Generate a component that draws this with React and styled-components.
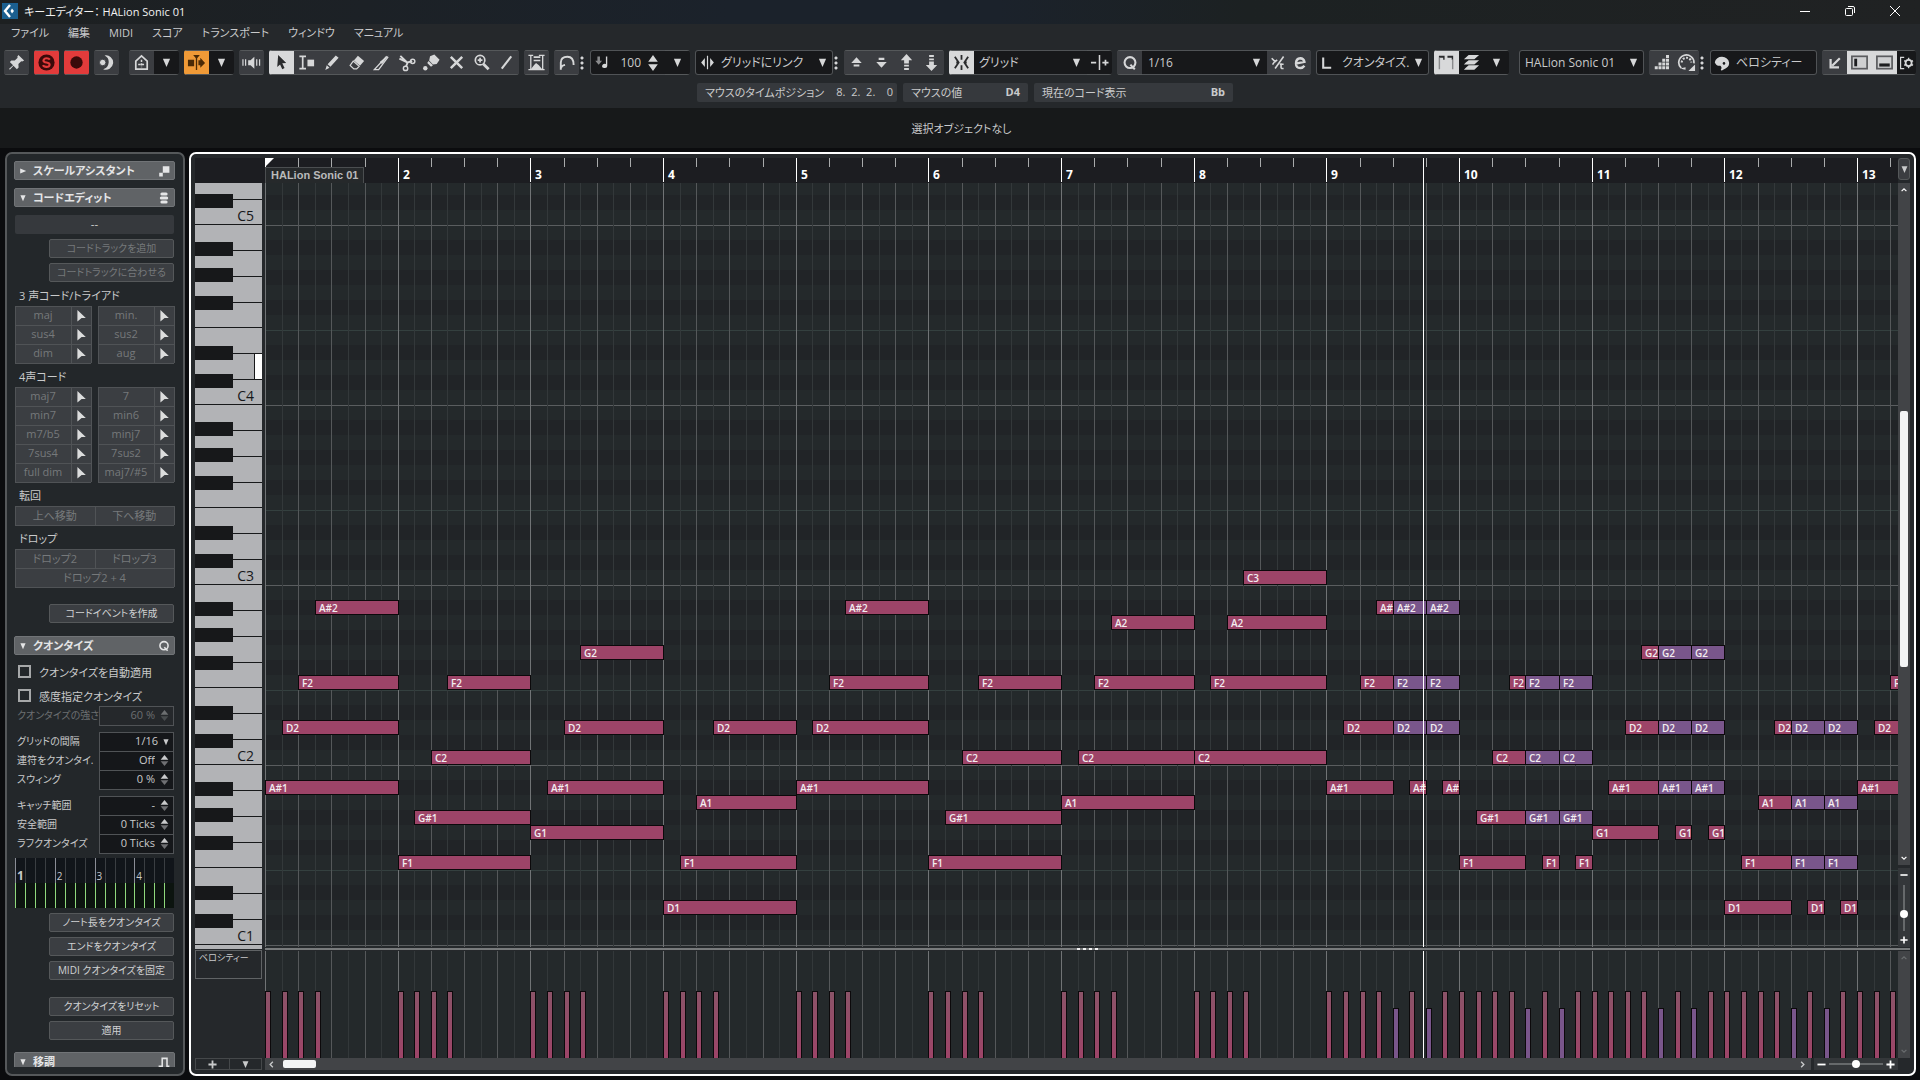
import React from "react";
import styled, { createGlobalStyle, css } from "styled-components";

const BAR = 132.667;
const ROW = 15;
const PLAYHEAD = 8.726;

// room left for the roll once the inspector, keys and scrollbar are placed
const VIEW = window.innerWidth - 287;
const BARS = Math.ceil(VIEW / BAR);

const SEMI = { C: 0, "C#": 1, D: 2, "D#": 3, E: 4, F: 5, "F#": 6, G: 7, "G#": 8, A: 9, "A#": 10, B: 11 };
const C1_TOP = 747;

const xAt = (bar, eighth = 0) => Math.round((bar + eighth / 8) * BAR);
const yAt = (name) => {
  const octave = Number(name.slice(-1));
  return C1_TOP - ROW * (12 * (octave - 1) + SEMI[name.slice(0, -1)]);
};

const CHORDS = [
  ["A#1", "D2", "F2", "A#2"],
  ["F1", "G#1", "C2", "F2"],
  ["G1", "A#1", "D2", "G2"],
  ["D1", "F1", "A1", "D2"],
];

const song = [];
const add = (bar, from, to, name, soft = false) => song.push({ bar, from, to, name, soft });

[0, 1, 2, 3, 4, 5].forEach((bar) => CHORDS[bar % 4].forEach((n, i) => add(bar, i, 8, n)));
["A1", "C2", "F2", "A2"].forEach((n, i) => add(6, i, 8, n));
["C2", "F2", "A2", "C3"].forEach((n, i) => add(7, i, 8, n));
[8, 9, 10, 11, 12].forEach((bar) => {
  const chord = CHORDS[(bar - 8) % 4];
  chord.forEach((n, i) => add(bar, i, 4, n));
  [4, 6].forEach((at) => {
    chord.slice(1).forEach((n) => add(bar, at, at + 2, n, true));
    add(bar, at + 1, at + 2, chord[0]);
  });
});

const notes = song.filter((n) => xAt(n.bar, n.from) < VIEW);
const hits = [...new Map(notes.map((n) => [`${n.bar}-${n.from}`, n])).values()];

const lines = Array.from({ length: BARS * 8 }, (_, i) => ({
  x: xAt(0, i),
  kind: i % 8 === 0 ? "bar" : i % 2 === 0 ? "beat" : "sub",
}));

const OCTAVE_ROWS = ["w", "b", "w", "b", "w", "b", "w", "w", "b", "w", "b", "w"];
const rowStops = OCTAVE_ROWS.map(
  (r, i) => `${r === "w" ? "#24292b" : "#212427"} ${i * ROW}px ${(i + 1) * ROW}px`
).join(", ");

/* ---------- icons ---------- */

const Svg = ({ children, size = 20, ...rest }) => (
  <svg width={size} height={size} viewBox="0 0 20 20" fill="currentColor" aria-hidden="true" {...rest}>
    {children}
  </svg>
);

const stroke = { fill: "none", stroke: "currentColor", strokeWidth: 2 };

const icons = {
  pin: (
    <path d="M12 2l6 6-2 1-1-.4-3 3 .2 3.600-1.800 1.800-3.600-3.600L3 17.500l-.8-.8 4.200-3.800L3 9.400l1.600-1.600 3.600.2 3-3L10.800 4z" />
  ),
  solo: (
    <>
      <circle cx="10" cy="10" r="8.500" fill="#3a0a0a" />
      <path d="M13.500 7Q12.500 5.500 10 5.500T6.800 7.800Q6.800 9.500 10 10T13.300 12.400Q13 14.600 10 14.600T6.300 12.800" fill="none" stroke="#e23b3b" strokeWidth="2.200" />
    </>
  ),
  record: <circle cx="10" cy="10" r="6.500" fill="#3a0a0a" />,
  moon: (
    <>
      <path d="M8 2.500a7.600 7.600 0 1 1-1.500 14.500A7.800 7.800 0 0 0 8 2.500z" />
      <circle cx="6" cy="10" r="3.400" stroke="#3b3d41" strokeWidth="1" />
    </>
  ),
  house: (
    <>
      <path d="M4 17V8.500L10 3l6 5.500V17z" fill="none" stroke="currentColor" strokeWidth="1.800" />
      <path d="M10 7v8M6.500 12h7" fill="none" stroke="currentColor" strokeWidth="1.600" strokeDasharray="2.500 1.200" />
    </>
  ),
  autoscroll: (
    <g fill="#4a2a06">
      <path d="M6.500 2h7L10.700 5.500V18H9.300V5.500zM1 7h6.500v7H1zM12 7.500h2V5l5 5.500-5 5v-2.500h-2z" />
    </g>
  ),
  speaker: (
    <>
      <path d="M6.500 7.500H9L13 4v12.500L9 13H6.500z" />
      <path d="M1 6.500v7M3.800 6.500v7M15.500 6.500v7M18.500 6.500v7" fill="none" stroke="currentColor" strokeWidth="1.300" />
    </>
  ),
  arrow: <path d="M6.500 2l8.500 8.500-4.200.4 2.400 5-2.400 1.100-2.300-5-3 2.800z" fill="#2a2b2d" />,
  range: (
    <>
      <path d="M2.500 3.500h7M6 3.500v13M2.500 16.500h7" {...stroke} strokeWidth="1.800" />
      <rect x="11" y="7" width="7" height="7" />
    </>
  ),
  pencil: <path d="M14.500 2.500l3 2.500-8.600 9.600-3-2.700zM5 13l2.900 2.600L3.500 18z" />,
  erase: (
    <>
      <path d="M11.500 3l6.500 5.500-4.300 4.800-6.500-5.500z" />
      <path d="M6.500 8.500l6.300 5.500-2.600 2.800H7.200L3.300 13z" fill="none" stroke="currentColor" strokeWidth="1.300" />
    </>
  ),
  trim: (
    <>
      <path d="M17.500 2.500l-7 9-2.500-2z" />
      <path d="M15.500 3.500L2.500 17.500h4.500L17 4" fill="none" stroke="currentColor" strokeWidth="1.400" />
    </>
  ),
  scissors: (
    <>
      <path d="M3.500 3L11 10.200l-1.500 4.300M2.500 6L11 10l5-1.500" {...stroke} />
      <circle cx="9" cy="16.200" r="2.300" {...stroke} strokeWidth="1.500" />
      <circle cx="16.500" cy="8.800" r="2.300" {...stroke} strokeWidth="1.500" />
    </>
  ),
  glue: (
    <>
      <path d="M13 1.500l5.500 5.500-3 4.500-4 .5-4-4 1-4.500z" />
      <path d="M7 8.500l4.500 4.500-2 1.500L5.500 10.500z" />
      <circle cx="3.500" cy="16" r="2.300" />
    </>
  ),
  mute: <path d="M4 4l12 12M16 4L4 16" {...stroke} strokeWidth="2.600" />,
  zoom: (
    <>
      <circle cx="8.500" cy="7.500" r="5" {...stroke} strokeWidth="1.800" />
      <path d="M8.500 5v5M6 7.500h5" {...stroke} strokeWidth="1.800" />
      <path d="M12 11.500l5.500 5.500" {...stroke} strokeWidth="3" />
    </>
  ),
  line: <path d="M5 16.500L15 3.500" {...stroke} strokeWidth="2.200" />,
  insert: (
    <>
      <path d="M1.500 2.500h5M4 2.500v15M12.500 2.500H18.500M16.500 2.500v15M1.500 17.500H18.500" {...stroke} strokeWidth="1.400" />
      <path d="M7 3.500h7v1.800H7zM7 7h7v1.800H7zM4 17L7.500 12.500l2-2 3 2.500 3.500 4z" />
    </>
  ),
  curve: <path d="M4 17.500V10q0-6 7-6 6.500 0 6.500 8.500M4 16q1-3 4.500-3.500" {...stroke} />,
  noteIn: (
    <>
      <path d="M4 3h3v5h2.500l-4 4.500-4-4.500H4z" opacity=".6" />
      <path d="M14 3h1.600v11a3 2.500 0 1 1-1.600-2.200z" />
    </>
  ),
  linkGrid: <path d="M6.500 4v12L1.500 10zM9.200 1h1.600v18H9.200zM13.500 4v12l5-6z" />,
  up1: <path d="M10 4.500l5.500 6h-11zM7 12h6v2.300H7z" />,
  down1: <path d="M7 5h6v2.300H7zM10 15.500l5.500-6h-11z" />,
  up2: <path d="M10 1l6 6.500H12.500V11h-5V7.500H4zM7.500 12.300h5v2h-5zM7.500 15.800h5v2h-5z" />,
  down2: <path d="M10 19l6-6.500H12.500V9h-5v3.500H4zM7.500 5.700h5v2h-5zM7.500 2.200h5v2h-5z" />,
  snap: (
    <path d="M3 4l4 6-4 6M17 4l-4 6 4 6M10 2v5M10 13v5M4.500 10h3M12.500 10h3" fill="none" stroke="#2a2b2d" strokeWidth="1.900" />
  ),
  snapType: <path d="M1 9.200h5.500v1.800H1zM9.200 2h1.600v16H9.200zM13 9.200H19.500v1.800h-6.500zM15.400 7h1.800v6.200h-1.800z" />,
  q: (
    <>
      <circle cx="10" cy="9.500" r="6.800" {...stroke} strokeWidth="2.600" />
      <path d="M10.500 12l5.500 6" {...stroke} strokeWidth="2.600" />
    </>
  ),
  iter: (
    <path d="M2 5l4 4 2.500-2M5 9.500l-2 3M16 3L6 17M13 11v5q0 1.500 3 1M11.500 12h4.500" {...stroke} strokeWidth="1.900" />
  ),
  e: <path d="M4.500 10.800L15.500 8.500Q14.500 4 10.500 4 5 4.500 5 10.500q0 6 5.500 5.800 3 0 5-2.800" {...stroke} strokeWidth="3" />,
  ell: <path d="M4 3v13h10" {...stroke} strokeWidth="2.600" />,
  parts: (
    <g fill="#2a2b2d">
      <path d="M2 3h6v4H6.500V5H2zM11 3h6v4h-1.500V5H11z" />
      <path d="M2.500 5v12M16.500 7v10" stroke="#8a8b8d" strokeWidth="1.500" />
    </g>
  ),
  layers: <path d="M7 2h11l-5 4.500H2zM7 7.500h11L13 12H2l2-2zM7 13h11l-5 4.500H2l2-2z" />,
  steps: (
    <path d="M1 15h4v4H1zM6 15h4v4H6zM11 15h4v4h-4zM16 15h4v4h-4zM6 10h4v4H6zM11 10h4v4h-4zM16 10h4v4h-4zM11 5h4v4h-4zM16 5h4v4h-4zM16 0h4v4h-4z" />
  ),
  palette: (
    <>
      <path d="M4.500 16A8 8 0 1 1 17.800 11" {...stroke} strokeWidth="1.800" />
      <path d="M5 10a5 5 0 0 1 10 0" fill="none" stroke="currentColor" strokeWidth="2.200" strokeDasharray="2 1.600" />
      <path d="M4 16q2 1.500 5 1.500V15M19 12v7h-7z" />
    </>
  ),
  velocity: (
    <>
      <path d="M1 9a9 8 0 1 1 11 9q-3 2.500-3.500.5 2-3-.5-5-5.500.5-7-4.500z" />
      <circle cx="12.500" cy="10.500" r="1.600" fill="#17181a" />
    </>
  ),
  corner: <path d="M16 4L6.500 13.500M4.500 5v10.500H15" {...stroke} strokeWidth="2.800" />,
  leftZone: (
    <>
      <rect x="2" y="3.500" width="16" height="13" fill="#cfd0d1" stroke="#5b5c5f" strokeWidth="1.800" />
      <rect x="4.500" y="6" width="3" height="8" fill="#1d1e20" />
    </>
  ),
  lowZone: (
    <>
      <rect x="2" y="3.500" width="16" height="13" fill="#cfd0d1" stroke="#5b5c5f" strokeWidth="1.800" />
      <rect x="4.500" y="11" width="11" height="3.300" fill="#1d1e20" />
    </>
  ),
  setup: (
    <>
      <path d="M6.500 3H2v14h4.500" {...stroke} strokeWidth="1.500" />
      <circle cx="12" cy="10" r="3.800" {...stroke} strokeWidth="2.200" />
      <path d="M12 3.500v3M12 13.500v3M6.500 7l2.500 1.500M15 11.500l2.500 1.500M6.500 13L9 11.500M15 8.500L17.500 7" {...stroke} strokeWidth="1.800" />
    </>
  ),
  down: <path d="M3.500 3h13L10 18z" />,
  right: <path d="M3 3.500v13L18 10z" />,
  spin: <path d="M10 0l6 8.500H4zM10 20l6-8.500H4z" />,
  spinDim: (
    <>
      <path d="M10 0l7 8.500H3z" />
      <path d="M10 20l7-8.500H3z" opacity=".5" />
    </>
  ),
  scale: <path d="M8 2h11v11H8zM2 13h6v6H2z" />,
  chord: (
    <>
      <rect x="4" y="1" width="12" height="5" rx="2.500" />
      <rect x="3" y="7.500" width="14" height="5" rx="2.500" />
      <rect x="4" y="14" width="12" height="5" rx="2.500" />
    </>
  ),
  transpose: <path d="M1 17h6V4h8v13h4" {...stroke} strokeWidth="2.600" />,
  pointer: <path d="M4 0l14 13.500-7-.3L4 19z" />,
  chevUp: <path d="M4 13l6-6 6 6" {...stroke} strokeWidth="3" />,
  chevDown: <path d="M4 7l6 6 6-6" {...stroke} strokeWidth="3" />,
  chevLeft: <path d="M13 4l-6 6 6 6" {...stroke} strokeWidth="3" />,
  chevRight: <path d="M7 4l6 6-6 6" {...stroke} strokeWidth="3" />,
  minus: <path d="M1 8h18v4H1z" />,
  plus: <path d="M1 8h7V1h4v7h7v4h-7v7H8v-7H1z" />,
};

const Icon = ({ name, size }) => <Svg size={size}>{icons[name]}</Svg>;

/* ---------- styles ---------- */

const GlobalStyle = createGlobalStyle`
  * {
    box-sizing: border-box;
  }

  body {
    margin: 0;
    background: #0b0c0e;
    overflow: hidden;
  }

  body, button, input, select {
    font-family: "Open Sans", "Noto Sans CJK JP", sans-serif;
    font-feature-settings: "palt";
    font-size: 11px;
    color: #c9cacb;
  }

  button, input, select {
    margin: 0;
    padding: 0;
    border: 0;
    border-radius: 0;
    background: none;
    outline: none;
    appearance: none;
  }

  svg {
    display: block;
    flex: none;
  }
`;

const Window = styled.div`
  height: 100vh;
  display: flex;
  flex-direction: column;
`;

const Top = styled.header`
  background: #25282b;
  padding-bottom: 6px;
`;

const TitleBar = styled.div`
  display: flex;
  align-items: center;
  height: 24px;
  padding: 0 18px 2px 2px;
  gap: 6px;
  color: #f2f2f2;
  background: linear-gradient(90deg, #1d2021, #1b222b 38%, #1b222b 52%, #1c2122 65%, #202223);

  h1 {
    flex: 1;
    margin: 0;
    font-size: 11px;
    font-weight: 400;
    white-space: pre;
  }
`;

const Controls = styled.div`
  display: flex;
  gap: 31px;

  button {
    width: 14px;
    height: 14px;
    color: #fff;
  }
`;

const MenuBar = styled.nav`
  display: flex;
  gap: 19px;
  height: 18px;
  padding: 0 0 2px 11px;
  align-items: center;
`;

const Toolbar = styled.div`
  display: flex;
  gap: 5px;
  height: 25px;
  margin-top: 8px;
  padding: 0 4px;
`;

const tones = {
  plain: css`
    background: #3b3d41;
    color: #d6d7d8;
  `,
  red: css`
    background: #e23b3b;
  `,
  orange: css`
    background: #f09a37;
  `,
  light: css`
    background: #d8d9da;
  `,
  dark: css`
    background: #17181a;
    color: #d6d7d8;
  `,
};

const Group = styled.div`
  display: flex;
  flex: ${({ $grow }) => ($grow ? "1 1 auto" : "none")};
  width: ${({ $width }) => ($width ? `${$width}px` : "auto")};
  margin-left: ${({ $apart }) => ($apart ? "5px" : "0")};
  box-shadow: inset 0 0 0 1px #505356;
  border-radius: 3px;
  overflow: hidden;
  background: #17181a;
`;

const Tool = styled.button`
  display: flex;
  align-items: center;
  justify-content: center;
  flex: none;
  width: ${({ $width }) => $width || 25}px;
  height: 25px;
  ${({ $tone }) => tones[$tone || "plain"]}
  box-shadow: inset 0 1px 0 #55585a, inset 0 -1px 0 #55585a;
`;

const Lead = styled.span`
  display: flex;
  align-items: center;
  justify-content: center;
  flex: none;
  width: 24px;
  color: #d6d7d8;
`;

const Pick = styled.label`
  display: flex;
  flex: 1;
  min-width: 0;
  align-items: center;
  padding-right: 5px;
  color: #d6d7d8;

  select {
    flex: 1;
    min-width: 0;
    height: 25px;
    padding-left: ${({ $pad }) => $pad || 2}px;
    font-size: 12px;
  }
`;

const Tempo = styled.input`
  width: 27px;
  text-align: right;
  font-size: 12px;
`;

const Grip = styled.i`
  flex: none;
  width: 6px;
  margin: 5px 0 5px -5px;
  background: radial-gradient(circle at 3px 3px, #d6d7d8 1px, transparent 2px) 0 0 / 6px 5px;
`;

const InfoRow = styled.div`
  display: flex;
  justify-content: center;
  gap: 6px;
  margin-top: 8px;
  padding-left: 10px;
`;

const Info = styled.div`
  display: flex;
  align-items: center;
  justify-content: space-between;
  width: ${({ $width }) => $width}px;
  height: 19px;
  padding: 0 ${({ $light }) => ($light ? 4 : 8)}px 2px 8px;
  border-radius: 2px;
  background: #36393d;
  white-space: pre;

  b {
    font-weight: ${({ $light }) => ($light ? 400 : 700)};
  }
`;

const Status = styled.div`
  display: flex;
  flex: none;
  height: 40px;
  padding-left: 3px;
  align-items: center;
  justify-content: center;
  background: #17191a;
`;

const Workspace = styled.main`
  flex: 1;
  min-height: 0;
  display: flex;
  gap: 4px;
  padding: 4px 4px 4px 5px;
`;

const Sidebar = styled.aside`
  flex: none;
  width: 180px;
  padding: 7px 8px 7px 7px;
  border: 2px solid #55585a;
  border-radius: 7px;
  background: #23272a;
`;

const SideScroll = styled.div`
  display: flex;
  flex-direction: column;
  height: 100%;
  overflow: hidden;
`;

const Head = styled.button`
  display: flex;
  align-items: center;
  flex: none;
  gap: 6px;
  height: 19px;
  padding: 0 4px;
  margin-top: ${({ $gap }) => $gap || 0}px;
  border: 1px solid #717477;
  border-radius: 2px;
  background: #606366;
  color: #e4e5e6;
  text-align: left;
  font-weight: 600;

  span {
    flex: 1;
    padding-bottom: 1px;
  }
`;

const Readout = styled.output`
  flex: none;
  height: 19px;
  margin: 8px 1px 0;
  border-radius: 2px;
  background: #36393d;
  text-align: center;
  font-family: "Liberation Sans", sans-serif;
  line-height: 19px;
`;

const PushButton = styled.button`
  flex: none;
  width: 125px;
  height: 19px;
  margin: ${({ $gap }) => $gap || 5}px 1px 0 auto;
  padding-bottom: 2px;
  border: 1px solid #55585a;
  border-radius: 2px;
  background: #3b3e42;
  color: #d0d1d2;
  font-size: 10px;
  white-space: nowrap;

  &:disabled {
    color: #76797b;
  }
`;

const Caption = styled.div`
  flex: none;
  height: 16px;
  margin-top: 6px;
  padding-left: 5px;
  line-height: 16px;
`;

const Cells = styled.div`
  display: grid;
  flex: none;
  grid-template-columns: ${({ $cols }) => $cols};
  margin: 2px 1px 0;
`;

const Cell = styled.button`
  display: flex;
  align-items: center;
  justify-content: center;
  height: 19px;
  padding-bottom: ${({ $icon }) => ($icon ? 0 : 2)}px;
  grid-column: ${({ $wide }) => ($wide ? "1 / -1" : "auto")};
  background: #3b3e42;
  box-shadow: inset 1px 1px 0 #505356, 0 1px 0 #505356, 1px 0 0 #505356;
  color: ${({ $icon }) => ($icon ? "#dcdddd" : "#76797b")};
`;

const Check = styled.label`
  display: flex;
  flex: none;
  align-items: center;
  gap: 8px;
  height: 19px;
  margin-top: ${({ $gap }) => $gap}px;
  padding: 0 0 2px 4px;

  input {
    width: 13px;
    height: 13px;
    border: 2px solid #a6a8a9;
  }
`;

const Field = styled.div`
  display: flex;
  flex: none;
  align-items: center;
  height: 19px;
  margin: ${({ $gap }) => $gap || 0}px 1px 0;
  color: ${({ $off }) => ($off ? "#6c6f71" : "#c9cacb")};

  label {
    flex: 1;
    min-width: 0;
    padding: 0 0 2px 2px;
    white-space: nowrap;
    font-size: 10px;
  }

  span {
    display: flex;
    align-items: center;
    flex: none;
    width: 75px;
    height: 20px;
    padding-right: 4px;
    background: ${({ $off }) => ($off ? "#25282b" : "#15171a")};
    box-shadow: inset 0 0 0 1px #505356;
  }

  input, select {
    flex: 1;
    min-width: 0;
    height: 19px;
    margin-right: 4px;
    padding-bottom: 2px;
    text-align: right;
    text-align-last: right;
    color: inherit;
  }
`;

const QuantGrid = styled.div`
  display: flex;
  flex: none;
  height: 50px;
  margin: 5px 1px 0;
  background: linear-gradient(#11151a 50%, #0c140f 50%);
`;

const QuantBeat = styled.div`
  flex: 1;
  padding: 11px 0 0 2px;
  line-height: 14px;
  font-size: ${({ $first }) => ($first ? 12 : 10)}px;
  font-weight: ${({ $first }) => ($first ? 700 : 400)};
  background:
    repeating-linear-gradient(90deg, #8fd97c 0 1px, transparent 1px 10px) 0 25px / 100% 25px no-repeat,
    linear-gradient(#8a8d96, #8a8d96) 0 0 / 1px 25px no-repeat,
    repeating-linear-gradient(90deg, #3a3e42 0 1px, transparent 1px 10px);
`;

const Editor = styled.section`
  flex: 1;
  min-width: 0;
  display: grid;
  grid-template-columns: 67px minmax(0, 1fr) 12px;
  grid-template-rows: 25px minmax(0, 1fr) 4px 107px 12px;
  column-gap: 3px;
  padding: 4px;
  border: 2px solid #fff;
  border-radius: 7px;
  background: #25282b;
`;

const Body = styled.div`
  position: relative;
  overflow: hidden;
  margin-right: -3px;
  background: #24292b;
`;

const RulerCorner = styled.div`
  margin-right: -3px;
  background: #1c1d21;
`;

const Ruler = styled(Body)`
  background: #1c1d21;
`;

const Tick = styled.i`
  position: absolute;
  top: 0;
  width: 1px;
  height: ${({ $bar }) => ($bar ? 24 : 9)}px;
  background: ${({ $bar }) => ($bar ? "#fff" : "#a9abac")};
`;

const BarNumber = styled.b`
  position: absolute;
  top: 9px;
  padding-left: 5px;
  font-size: 12px;
  line-height: 16px;
  color: #fff;
`;

const PartName = styled.div`
  position: absolute;
  top: 9px;
  left: 0;
  height: 16px;
  padding: 0 5px;
  border: 1px solid #4b4e50;
  border-bottom: 0;
  background: #26292b;
  color: #b9babb;
  font: 600 11px/15px "Liberation Sans", sans-serif;
`;

const Locator = styled.i`
  position: absolute;
  top: 0;
  left: 0;
  border-top: 9px solid #fff;
  border-right: 9px solid transparent;
`;

const Roll = styled(Body)`
  background: linear-gradient(${rowStops}) 0 -138px / 100% 180px;

  &::before {
    content: "";
    position: absolute;
    inset: 0;
    background:
      linear-gradient(#5a5d5f 1px, transparent 1px) 0 42px / 100% 180px,
      linear-gradient(#34403f 1px, transparent 1px) 0 147px / 100% 180px;
  }
`;

const lineTones = { bar: "#707375", beat: "#55585a", sub: "#33383a" };

const GridLine = styled.i`
  position: absolute;
  top: 0;
  bottom: 0;
  width: 1px;
  background: ${({ $kind }) => lineTones[$kind]};
`;

const Note = styled.div`
  position: absolute;
  height: 15px;
  padding-left: 3px;
  overflow: hidden;
  border: 1px solid #0c090b;
  background: ${({ $soft }) => ($soft ? "#79568b" : "#9d4468")};
  color: #f3eef1;
  font-size: 10px;
  font-weight: 600;
  line-height: 14px;
  white-space: nowrap;
`;

const Hit = styled.i`
  position: absolute;
  bottom: 0;
  width: 6px;
  height: ${({ $soft }) => ($soft ? 50 : 67)}px;
  border: 1px solid #0c090b;
  border-bottom: 0;
  background: ${({ $soft }) => ($soft ? "#79568b" : "linear-gradient(#8b5368, #9d4468)")};
`;

const PlayLine = styled.i`
  position: absolute;
  top: 0;
  bottom: 0;
  width: 1px;
  background: #fff;
`;

const Keys = styled.div`
  grid-row: 2 / 4;
  overflow: hidden;
  margin-bottom: 2px;
`;

const Octave = styled.div`
  position: relative;

  &:first-child {
    margin-top: -138px;
  }
`;

const WhiteKey = styled.div`
  position: relative;
  height: ${({ $height }) => $height}px;
  padding: 7px 8px 0 0;
  border-bottom: 1px solid #17181a;
  background: #b2b3b6;
  color: #17181a;
  font-size: 14px;
  line-height: 18px;
  text-align: right;

  &::after {
    content: "";
    display: ${({ $pressed }) => ($pressed ? "block" : "none")};
    position: absolute;
    top: 0;
    right: 0;
    bottom: 0;
    width: 7px;
    border-left: 1px solid #17181a;
    background: #fff;
  }
`;

const BlackKey = styled.div`
  position: absolute;
  left: 0;
  width: 38px;
  height: 14px;
  background: #17181a;
`;

const Divider = styled.div`
  grid-column: 2 / 4;
  display: flex;
  justify-content: center;
  align-items: center;
  gap: 3px;
  height: 3px;
  margin-top: 1px;
  border-top: 2px solid #787b7c;

  i {
    width: 3px;
    height: 2px;
    margin-top: -4px;
    background: #f1f1f1;
  }
`;

const LaneName = styled.div`
  height: 29px;
  margin-top: -1px;
  padding: 0 3px;
  border: 1px solid #606365;
  font-size: 9px;
  line-height: 14px;
`;

const Split = styled.div`
  display: grid;
  grid-template-columns: 1fr 1fr;
  border: 1px solid #45484a;

  button {
    display: grid;
    place-items: center;
  }

  button + button {
    border-left: 1px solid #45484a;
  }
`;

const HScroll = styled.div`
  display: flex;
  align-items: center;
  justify-content: space-between;
  gap: 3px;
  min-width: 0;
  margin-right: -3px;
`;

const HTrack = styled.div`
  flex: 1;
  display: flex;
  align-items: center;
  height: 12px;
  padding: 0 4px 0 2px;
  background: #424447;

  i {
    width: 33px;
    height: 8px;
    margin: 0 auto 0 7px;
    border-radius: 2px;
    background: #f3f4f5;
  }
`;

const Zoomer = styled.div`
  display: flex;
  align-items: center;
  justify-content: space-between;
  flex-direction: ${({ $vertical }) => ($vertical ? "column" : "row")};
  width: ${({ $vertical }) => ($vertical ? 12 : 84)}px;
  height: ${({ $vertical }) => ($vertical ? 79 : 12)}px;
  padding: ${({ $vertical }) => ($vertical ? "3px 0" : "0 3px")};
  background: #34373a;
  color: #fff;

  input {
    width: ${({ $vertical }) => ($vertical ? 12 : 54)}px;
    height: ${({ $vertical }) => ($vertical ? 46 : 12)}px;
    writing-mode: ${({ $vertical }) => ($vertical ? "vertical-lr" : "horizontal-tb")};
    background: linear-gradient(#66696b, #66696b) center / ${({ $vertical }) => ($vertical ? "2px 100%" : "100% 2px")} no-repeat;
  }

  input::-webkit-slider-thumb {
    appearance: none;
    width: 8px;
    height: 8px;
    border-radius: 50%;
    background: #fff;
  }
`;

const RulerMenu = styled.button`
  display: grid;
  place-items: center;
  width: 12px;
  height: 22px;
  border: 1px solid #55585a;
  border-radius: 3px;
  background: #3b3d41;
`;

const VScroll = styled.div`
  display: flex;
  flex-direction: column;
  min-height: 0;
  gap: 3px;
`;

const VTrack = styled.div`
  flex: 1;
  display: flex;
  flex-direction: column;
  align-items: center;
  justify-content: space-between;
  padding: 3px 0;
  background: #424447;
  color: ${({ $dim }) => ($dim ? "#6a6d6f" : "#fff")};

  i {
    width: 8px;
    height: 38%;
    margin-top: 30px;
    border-radius: 2px;
    background: #f3f4f5;
  }
`;

/* ---------- pieces ---------- */

const Select = ({ label, value, pad }) => (
  <Pick $pad={pad}>
    <select aria-label={label} defaultValue={value}>
      <option>{value}</option>
    </select>
    <Icon name="down" size={11} />
  </Pick>
);

const tools = ["arrow", "range", "pencil", "erase", "trim", "scissors", "glue", "mute", "zoom", "line"];

const Button = ({ name, tone, width, size = 19 }) => (
  <Tool $tone={tone} $width={width} aria-label={name}>
    <Icon name={name} size={size} />
  </Tool>
);

const MainToolbar = () => (
  <Toolbar>
    <Group><Button name="pin" /></Group>
    <Group><Button name="solo" tone="red" /></Group>
    <Group><Button name="record" tone="red" /></Group>
    <Group><Button name="moon" /></Group>
    <Group $apart>
      <Button name="house" />
      <Button name="down" tone="dark" size={11} />
    </Group>
    <Group>
      <Button name="autoscroll" tone="orange" />
      <Button name="down" tone="dark" size={11} />
    </Group>
    <Group><Button name="speaker" /></Group>
    <Group>
      {tools.map((t) => <Button key={t} name={t} tone={t === "arrow" ? "light" : "plain"} />)}
    </Group>
    <Group><Button name="insert" /></Group>
    <Group><Button name="curve" /></Group>
    <Grip />
    <Group $width={100}>
      <Lead><Icon name="noteIn" size={17} /></Lead>
      <Tempo aria-label="velocity" defaultValue="100" />
      <Lead><Icon name="spin" size={16} /></Lead>
      <Button name="down" tone="dark" size={11} />
    </Group>
    <Group $width={138}>
      <Lead><Icon name="linkGrid" size={15} /></Lead>
      <Select label="grid link" value="グリッドにリンク" />
    </Group>
    <Grip />
    <Group>
      <Button name="up1" /><Button name="down1" /><Button name="up2" /><Button name="down2" />
    </Group>
    <Group $width={163}>
      <Button name="snap" tone="light" />
      <Select label="snap" value="グリッド" pad={5} />
      <Button name="snapType" tone="dark" />
    </Group>
    <Group $width={194}>
      <Button name="q" size={16} />
      <Select label="quantize" value="1/16" pad={6} />
      <Button name="iter" width={22} size={17} />
      <Button name="e" width={22} size={16} />
    </Group>
    <Group $width={113}>
      <Lead><Icon name="ell" size={16} /></Lead>
      <Select label="length" value="クオンタイズ." />
    </Group>
    <Group>
      <Button name="parts" tone="light" />
      <Button name="layers" tone="dark" />
      <Button name="down" tone="dark" size={11} />
    </Group>
    <Group $width={125} $apart>
      <Select label="part" value="HALion Sonic 01" pad={6} />
    </Group>
    <Group>
      <Button name="steps" size={15} />
      <Button name="palette" />
    </Group>
    <Grip />
    <Group $grow>
      <Lead><Icon name="velocity" size={16} /></Lead>
      <Pick $pad={2}>
        <select aria-label="color mode"><option>ベロシティー</option></select>
      </Pick>
    </Group>
    <Group>
      <Button name="corner" size={16} />
      <Button name="leftZone" tone="light" />
      <Button name="lowZone" tone="light" />
      <Button name="setup" tone="dark" width={19} size={16} />
    </Group>
  </Toolbar>
);

const ChordCells = ({ rows }) => (
  <Cells $cols="56px 20px 7px 56px 20px">
    {rows.map(([a, b]) => (
      <React.Fragment key={a}>
        <Cell disabled>{a}</Cell>
        <Cell $icon aria-label={a}><Icon name="pointer" size={12} /></Cell>
        <span />
        <Cell disabled>{b}</Cell>
        <Cell $icon aria-label={b}><Icon name="pointer" size={12} /></Cell>
      </React.Fragment>
    ))}
  </Cells>
);

const Value = ({ id, label, value, gap, off }) => (
  <Field $gap={gap} $off={off}>
    <label htmlFor={id}>{label}</label>
    <span>
      {id === "grid" ? (
        <select id={id}><option>{value}</option></select>
      ) : (
        <input id={id} defaultValue={value} disabled={off} />
      )}
      <Icon name={id === "grid" ? "down" : "spinDim"} size={id === "grid" ? 8 : 11} />
    </span>
  </Field>
);

const Section = ({ title, icon, open, gap }) => (
  <Head $gap={gap}>
    <Icon name={open ? "down" : "right"} size={8} />
    <span>{title}</span>
    <Icon name={icon} size={12} />
  </Head>
);

const Inspector = () => (
  <Sidebar>
    <SideScroll>
      <Section title="スケールアシスタント" icon="scale" />
      <Section title="コードエディット" icon="chord" open gap={8} />
      <Readout>--</Readout>
      <PushButton disabled>コードトラックを追加</PushButton>
      <PushButton disabled>コードトラックに合わせる</PushButton>
      <Caption>3 声コード/トライアド</Caption>
      <ChordCells rows={[["maj", "min."], ["sus4", "sus2"], ["dim", "aug"]]} />
      <Caption>4声コード</Caption>
      <ChordCells rows={[["maj7", "7"], ["min7", "min6"], ["m7/b5", "minj7"], ["7sus4", "7sus2"], ["full dim", "maj7/#5"]]} />
      <Caption>転回</Caption>
      <Cells $cols="1fr 1fr">
        <Cell disabled>上へ移動</Cell>
        <Cell disabled>下へ移動</Cell>
      </Cells>
      <Caption>ドロップ</Caption>
      <Cells $cols="1fr 1fr">
        <Cell disabled>ドロップ2</Cell>
        <Cell disabled>ドロップ3</Cell>
        <Cell disabled $wide>ドロップ2 + 4</Cell>
      </Cells>
      <PushButton $gap={17}>コードイベントを作成</PushButton>
      <Section title="クオンタイズ" icon="q" open gap={13} />
      <Check $gap={8}><input type="checkbox" />クオンタイズを自動適用</Check>
      <Check $gap={5}><input type="checkbox" />感度指定クオンタイズ</Check>
      <Value id="strength" label="クオンタイズの強さ" value="60 %" off />
      <Value id="grid" label="グリッドの間隔" value="1/16" gap={7} />
      <Value id="tuplet" label="連符をクオンタイ." value="Off" />
      <Value id="swing" label="スウィング" value="0 %" />
      <Value id="catch" label="キャッチ範囲" value="-" gap={7} />
      <Value id="safe" label="安全範囲" value="0 Ticks" />
      <Value id="rough" label="ラフクオンタイズ" value="0 Ticks" />
      <QuantGrid>
        {[1, 2, 3, 4].map((n) => <QuantBeat key={n} $first={n === 1}>{n}</QuantBeat>)}
      </QuantGrid>
      <PushButton>ノート長をクオンタイズ</PushButton>
      <PushButton>エンドをクオンタイズ</PushButton>
      <PushButton>MIDI クオンタイズを固定</PushButton>
      <PushButton $gap={17}>クオンタイズをリセット</PushButton>
      <PushButton>適用</PushButton>
      <Section title="移調" icon="transpose" open gap={12} />
    </SideScroll>
  </Sidebar>
);

const WHITE = [["B", 26], ["A", 26], ["G", 26], ["F", 25], ["E", 26], ["D", 26], ["C", 25]];
const BLACK = [17, 43, 71, 121, 149];

const Keyboard = () => (
  <Keys>
    {[5, 4, 3, 2, 1, 0].map((octave, i) => (
      <Octave key={octave}>
        {WHITE.map(([n, h]) => (
          <WhiteKey key={n} $height={h} $pressed={n === "D" && i === 1}>
            {n === "C" && octave > 0 ? `C${octave}` : ""}
          </WhiteKey>
        ))}
        {BLACK.map((top) => <BlackKey key={top} style={{ top }} />)}
      </Octave>
    ))}
  </Keys>
);

const GridLines = () => lines.map((l) => <GridLine key={l.x} $kind={l.kind} style={{ left: l.x }} />);

const Playhead = () => <PlayLine style={{ left: xAt(PLAYHEAD) }} />;

const KeyEditor = () => (
  <Editor>
    <RulerCorner />
    <Ruler>
      {lines.filter((l) => l.kind !== "sub").map((l) => (
        <Tick key={l.x} $bar={l.kind === "bar"} style={{ left: l.x }} />
      ))}
      {Array.from({ length: BARS - 1 }, (_, i) => (
        <BarNumber key={i} style={{ left: xAt(i + 1) }}>{i + 2}</BarNumber>
      ))}
      <PartName>HALion Sonic 01</PartName>
      <Locator />
      <Playhead />
    </Ruler>
    <RulerMenu aria-label="ruler"><Icon name="down" size={9} /></RulerMenu>

    <Keyboard />
    <Roll>
      <GridLines />
      {notes.map((n, i) => (
        <Note
          key={i}
          $soft={n.soft}
          style={{
            left: xAt(n.bar, n.from),
            top: yAt(n.name),
            width: xAt(n.bar, n.to) - xAt(n.bar, n.from) + 1,
          }}
        >
          {n.name}
        </Note>
      ))}
      <Playhead />
    </Roll>
    <VScroll>
      <VTrack>
        <Icon name="chevUp" size={8} />
        <i />
        <Icon name="chevDown" size={8} />
      </VTrack>
      <Zoomer $vertical>
        <Icon name="minus" size={8} />
        <input type="range" aria-label="vertical zoom" defaultValue="66" />
        <Icon name="plus" size={8} />
      </Zoomer>
    </VScroll>

    <Divider><i /><i /><i /><i /></Divider>

    <LaneName>ベロシティー</LaneName>
    <Body>
      <GridLines />
      {hits.map((n, i) => <Hit key={i} $soft={n.soft} style={{ left: xAt(n.bar, n.from) }} />)}
      <Playhead />
    </Body>
    <VScroll>
      <VTrack $dim>
        <Icon name="chevUp" size={8} />
        <Icon name="chevDown" size={8} />
      </VTrack>
    </VScroll>

    <Split>
      <button aria-label="add lane"><Icon name="plus" size={9} /></button>
      <button aria-label="lane presets"><Icon name="down" size={9} /></button>
    </Split>
    <HScroll>
      <HTrack>
        <Icon name="chevLeft" size={9} />
        <i />
        <Icon name="chevRight" size={9} />
      </HTrack>
      <Zoomer>
        <Icon name="minus" size={9} />
        <input type="range" aria-label="horizontal zoom" defaultValue="50" />
        <Icon name="plus" size={9} />
      </Zoomer>
    </HScroll>
  </Editor>
);

export default function App() {
  return (
    <Window>
      <GlobalStyle />
      <Top>
        <TitleBar>
          <svg width="16" height="16" viewBox="0 0 16 16" aria-hidden="true">
            <rect width="16" height="16" fill="#1b5f8f" />
            <path d="M8 2L3 8l5 6" fill="none" stroke="#fff" strokeWidth="2.400" />
            <path d="M10 5.500l2 2.500-2 2.500L8.500 8z" fill="#fff" />
          </svg>
          <h1>キーエディター： HALion Sonic 01</h1>
          <Controls>
            <button aria-label="minimize">
              <svg width="14" height="14"><path d="M2 7.500h10" stroke="currentColor" /></svg>
            </button>
            <button aria-label="restore">
              <svg width="14" height="14" fill="none" stroke="currentColor">
                <rect x="2.500" y="4.500" width="7" height="7" rx="1" />
                <path d="M5 2.500h5q1.500 0 1.500 1.500v5" />
              </svg>
            </button>
            <button aria-label="close">
              <svg width="14" height="14"><path d="M2 2l10 10M12 2L2 12" stroke="currentColor" /></svg>
            </button>
          </Controls>
        </TitleBar>
        <MenuBar>
          {["ファイル", "編集", "MIDI", "スコア", "トランスポート", "ウィンドウ", "マニュアル"].map((m) => (
            <span key={m}>{m}</span>
          ))}
        </MenuBar>
        <MainToolbar />
        <InfoRow>
          <Info $width={200} $light>マウスのタイムポジション<b>8.  2.  2.    0</b></Info>
          <Info $width={125}>マウスの値<b>D4</b></Info>
          <Info $width={199}>現在のコード表示<b>Bb</b></Info>
        </InfoRow>
      </Top>
      <Status>選択オブジェクトなし</Status>
      <Workspace>
        <Inspector />
        <KeyEditor />
      </Workspace>
    </Window>
  );
}
